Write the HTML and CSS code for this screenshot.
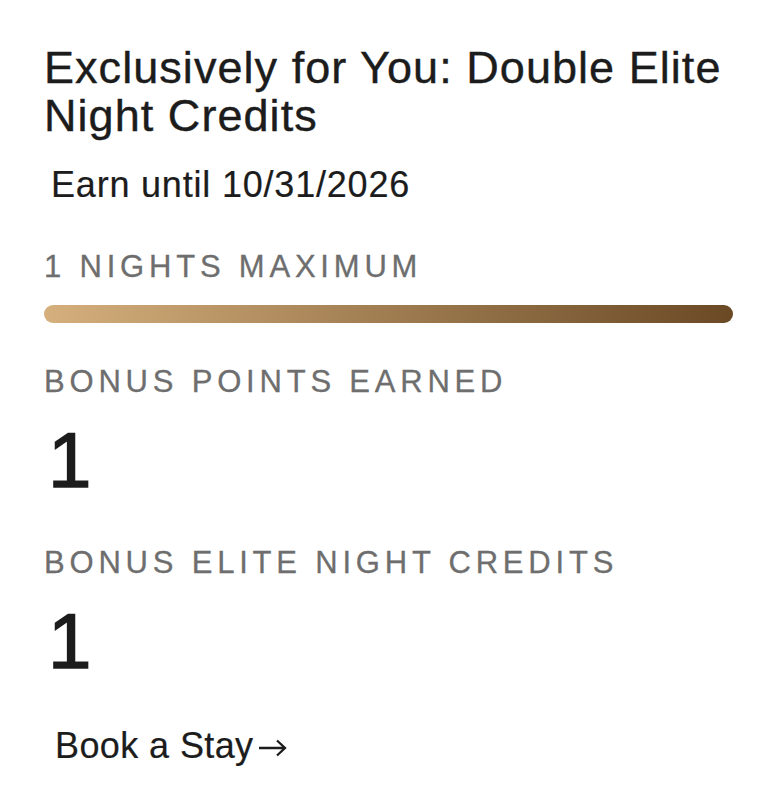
FILE: index.html
```html
<!DOCTYPE html>
<html lang="en">
<head>
    <meta charset="UTF-8">
    <title>Double Elite Night Credits</title>
    <meta name="viewport" content="width=device-width, initial-scale=1.0">
    <link rel="stylesheet" href="styles.css">
</head>
<body>
    <div class="offer-card">
        <h2 class="offer-title">Exclusively for You: Double Elite Night Credits</h2>
        <p class="offer-dates">Earn until 10/31/2026</p>

        <!-- Progress -->
        <div class="offer-progress">
            <p class="offer-label">1 NIGHTS MAXIMUM</p>
            <div class="progress-bar"></div>
        </div>

        <!-- Stats -->
        <div class="offer-stat">
            <p class="offer-label">BONUS POINTS EARNED</p>
            <p class="stat-value">1</p>
        </div>
        <div class="offer-stat">
            <p class="offer-label">BONUS ELITE NIGHT CREDITS</p>
            <p class="stat-value">1</p>
        </div>

        <a href="#" class="book-link">Book a Stay<svg class="book-arrow" width="30" height="22" viewBox="0 0 30 22"><path d="M1 11H27M19 3.5L27 11L19 18.5" fill="none" stroke="#1c1c1c" stroke-width="2.3"/></svg></a>
    </div>
</body>
</html>
```

FILE: styles.css
```css
html, body {
    margin: 0;
    padding: 0;
    background: #fff;
    font-family: "Liberation Sans", Arial, sans-serif;
    color: #1c1c1c;
}
.offer-card {
    padding: 44px 44px 0 44px;
}
.offer-title {
    margin: 0;
    font-size: 45px;
    line-height: 48px;
    font-weight: normal;
    letter-spacing: 1.05px;
    color: #1c1c1c;
    -webkit-text-stroke: 0.4px #1c1c1c;
}
.offer-dates {
    margin: 23px 0 0 7px;
    font-size: 36px;
    line-height: 44px;
    letter-spacing: 0.8px;
    -webkit-text-stroke: 0.2px #1c1c1c;
}
.offer-label {
    margin: 0;
    font-size: 31px;
    line-height: 36px;
    letter-spacing: 4.8px;
    color: #6e6e6e;
    -webkit-text-stroke: 0.3px #6e6e6e;
}
.offer-progress {
    margin-top: 42px;
}
.progress-bar {
    margin: 20px 3px 0 0;
    height: 18px;
    border-radius: 9px;
    background: linear-gradient(to right, #d5b07d, #6a4925);
}
.offer-stat {
    margin-top: 41px;
}
.offer-stat + .offer-stat {
    margin-top: 45px;
}
.stat-value {
    margin: 20px 0 0 4px;
    font-size: 78px;
    line-height: 80px;
    color: #1c1c1c;
    -webkit-text-stroke: 1.5px #1c1c1c;
}
.book-link {
    display: inline-block;
    margin: 43px 0 0 11px;
    font-size: 36px;
    line-height: 44px;
    letter-spacing: 0.4px;
    color: #1c1c1c;
    text-decoration: none;
    -webkit-text-stroke: 0.2px #1c1c1c;
}
.book-arrow {
    margin-left: 4px;
    vertical-align: middle;
}
```
